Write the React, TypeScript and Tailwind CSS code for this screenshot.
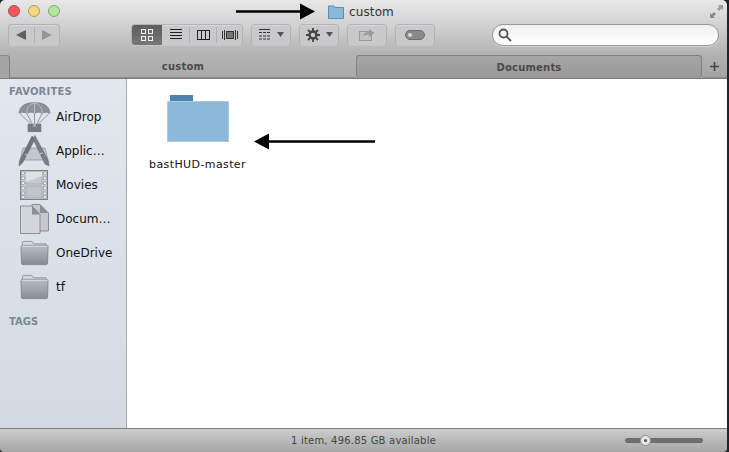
import React from 'react';

const uiFont = { fontFamily: '"DejaVu Sans", "Liberation Sans", sans-serif' };

function FolderGlyph() {
  return (
    <svg width="29" height="26" viewBox="0 0 30 26">
      <defs>
        <linearGradient id="sideFolder" x1="0" y1="0" x2="0" y2="1">
          <stop offset="0" stopColor="#b9bec6" />
          <stop offset="1" stopColor="#868c96" />
        </linearGradient>
      </defs>
      <path d="M2.5 5V2.5Q2.5 1 4 1H11Q13 1 14 3.5H27V7H2.5Z" fill="#d6dae0" stroke="#7e848d" strokeWidth="0.8" />
      <path d="M1 6.5Q1 5 2.5 5H27.5Q29 5 29 6.5L28.5 23.5Q28.5 25 27 25H3Q1.5 25 1.5 23.5Z" fill="url(#sideFolder)" stroke="#777d87" strokeWidth="0.8" />
      <path d="M1.5 6H28.5" stroke="#dfe2e6" strokeWidth="1" />
    </svg>
  );
}

function AirDropGlyph() {
  return (
    <svg width="33" height="32" viewBox="0 0 34 32">
      <path d="M1 12Q2 1 17 1Q32 1 33 12Q29 10 25 12Q21 10 17 12Q13 10 9 12Q5 10 1 12Z" fill="#8d9299" stroke="#6f747b" strokeWidth="0.6" />
      <path d="M9 12Q9 4 17 1Q25 4 25 12M17 1V12" fill="none" stroke="#c1c5ca" strokeWidth="0.9" />
      <path d="M1.5 12L13 23M9 12L14.5 23M25 12L19.5 23M32.5 12L21 23M17 12V23" fill="none" stroke="#7f848b" strokeWidth="0.8" />
      <rect x="10" y="23" width="14" height="8.5" fill="#777c83" />
      <rect x="15.5" y="23" width="3" height="3" fill="#a9adb2" />
    </svg>
  );
}

function AppsGlyph() {
  return (
    <svg width="32" height="32" viewBox="0 0 32 32">
      <path d="M5 13H27L30 25H2Z" fill="#c3c7cd" stroke="#8a8f97" strokeWidth="0.7" />
      <path d="M14 1L1.5 26L1 31L4.5 28L17 4Z" fill="#70757d" stroke="#5f646c" strokeWidth="0.5" />
      <path d="M17 0.5L15 4L27 29L31 31L30.5 26Z" fill="#7a7f87" stroke="#62676f" strokeWidth="0.5" />
      <path d="M7 19L9.5 20.3M22 19L24.5 17.8" stroke="#d5d8dc" strokeWidth="1" />
    </svg>
  );
}

function MoviesGlyph() {
  return (
    <svg width="28" height="30" viewBox="0 0 28 30">
      <rect x="0.5" y="0.5" width="27" height="29" fill="#c9cdd2" stroke="#7c8189" />
      <rect x="6" y="2" width="16" height="12" fill="#c6cacf" stroke="#8d9298" strokeWidth="0.5" />
      <rect x="6" y="16" width="16" height="12" fill="#c0c4ca" stroke="#8d9298" strokeWidth="0.5" />
      <path d="M6 2H22V6L6 12Z" fill="#dfe2e5" />
      {[2, 7, 12, 17, 22, 26].map((y) => (
        <React.Fragment key={y}>
          <rect x="1.5" y={y} width="3" height="2.6" fill="#f2f3f5" stroke="#777c84" strokeWidth="0.5" />
          <rect x="23.5" y={y} width="3" height="2.6" fill="#f2f3f5" stroke="#777c84" strokeWidth="0.5" />
        </React.Fragment>
      ))}
    </svg>
  );
}

function DocsGlyph() {
  return (
    <svg width="29" height="30" viewBox="0 0 29 30">
      <path d="M14 0.5H20L28.5 9V27H18V10L12 4V0.5Z" fill="#c4c8ce" stroke="#767b83" strokeWidth="0.8" />
      <path d="M0.5 2H12L20 10.5V29.5H0.5Z" fill="#d3d6db" stroke="#767b83" strokeWidth="0.8" />
      <path d="M12 2V10.5H20Z" fill="#8b9097" />
      <path d="M20 0.5V9H28.5Z" fill="#8b9097" />
    </svg>
  );
}

function ToolbarBtn({ className, children }: { className: string; children: React.ReactNode }) {
  return (
    <div className={`h-[22px] flex items-center rounded-[4px] border border-[#b4b4b4] border-b-[#c6c6c6] bg-[#c9c9cb] shadow-[inset_0_1px_0_#d8d8da] ${className}`}>
      {children}
    </div>
  );
}

function SideItem({ label, children }: { label: string; children: React.ReactNode }) {
  return (
    <div className="h-[34px] flex items-center">
      <div className="w-[56px] pl-[17px] pr-[5px] flex items-center justify-center shrink-0">{children}</div>
      <span className="text-[12px] text-[#111] whitespace-nowrap">{label}</span>
    </div>
  );
}

function Caret() {
  return (
    <svg width="7" height="5" viewBox="0 0 7 5">
      <path d="M0 0H7L3.5 5Z" fill="#555" />
    </svg>
  );
}

export default function App() {
  return (
    <div style={uiFont} className="relative w-[729px] h-[452px] bg-[#20242c] overflow-hidden">
      <div className="w-[727px] h-full flex flex-col rounded-t-[5px] rounded-b-[4px] overflow-hidden">
        {/* 타이틀 + 툴바 */}
        <div className="h-[55px] shrink-0 bg-gradient-to-b from-[#e8e8e8] via-[#cfcfcf] to-[#b2b2b2]">
          <div className="h-[23px] relative flex items-center justify-center">
            <div className="absolute left-[8px] top-[5px] flex gap-[8px]">
              <span className="w-[12px] h-[12px] rounded-full bg-[#f0585c] border border-[#b24a4d]" />
              <span className="w-[12px] h-[12px] rounded-full bg-[#f5d77e] border border-[#b39a54]" />
              <span className="w-[12px] h-[12px] rounded-full bg-[#b5e5a0] border border-[#7fa86f]" />
            </div>
            <div className="mr-[5px] flex items-center gap-[5px]">
              <svg width="16" height="14" viewBox="0 0 16 14">
                <path d="M0.5 13.5V1H6L7 2.5H15.5V13.5Z" fill="#8cb8dc" stroke="#5f8bb0" />
              </svg>
              <span className="text-[12px] text-[#333] tracking-[0.1px]">custom</span>
            </div>
            <svg className="absolute right-[3px] top-[4px]" width="15" height="15" viewBox="0 0 15 15">
              <path d="M9 1H14V6L12.5 4.5L10 7L8 5L10.5 2.5Z" fill="#9a9a9a" />
              <path d="M1 9V14H6L4.5 12.5L7 10L5 8L2.5 10.5Z" fill="#8a8a8a" />
            </svg>
          </div>

          <div className="h-[23px] flex items-center pl-[8px]">
            <ToolbarBtn className="w-[52px]">
              <div className="flex-1 flex justify-center">
                <svg width="10" height="10" viewBox="0 0 10 10"><path d="M0 5L10 0V10Z" fill="#5f5f5f" /></svg>
              </div>
              <div className="w-px h-[16px] bg-[#b2b2b2]" />
              <div className="flex-1 flex justify-center">
                <svg width="10" height="10" viewBox="0 0 10 10"><path d="M10 5L0 0V10Z" fill="#959595" /></svg>
              </div>
            </ToolbarBtn>

            <ToolbarBtn className="w-[112px] ml-[71px] overflow-hidden">
              <div className="w-[30px] h-full flex items-center justify-center bg-gradient-to-b from-[#5d5d5d] to-[#787878]">
                <svg width="12" height="12" viewBox="0 0 12 12" fill="none" stroke="#f2f2f2" strokeWidth="1">
                  <rect x="0.5" y="0.5" width="4" height="4" /><rect x="7.5" y="0.5" width="4" height="4" />
                  <rect x="0.5" y="7.5" width="4" height="4" /><rect x="7.5" y="7.5" width="4" height="4" />
                </svg>
              </div>
              <div className="w-[27px] flex justify-center">
                <svg width="12" height="11" viewBox="0 0 12 11" stroke="#222" strokeWidth="1"><path d="M0 .5H12M0 3.5H12M0 6.5H12M0 9.5H12" /></svg>
              </div>
              <div className="w-px h-[16px] bg-[#b2b2b2]" />
              <div className="w-[26px] flex justify-center">
                <svg width="13" height="10" viewBox="0 0 13 10" fill="none" stroke="#222" strokeWidth="1"><rect x="0.5" y="0.5" width="12" height="9" /><path d="M4.5 0V10M8.5 0V10" /></svg>
              </div>
              <div className="w-px h-[16px] bg-[#b2b2b2]" />
              <div className="flex-1 flex justify-center">
                <svg width="16" height="10" viewBox="0 0 16 10" fill="none" stroke="#333" strokeWidth="1"><path d="M.5 1V9M2.5 0V10M13.5 0V10M15.5 1V9" /><rect x="4.5" y="1.5" width="7" height="7" fill="#777" /></svg>
              </div>
            </ToolbarBtn>

            <ToolbarBtn className="w-[40px] ml-[8px] justify-center gap-[7px]">
              <svg width="11" height="11" viewBox="0 0 11 11" stroke="#333" strokeWidth="1"><path d="M0 .5H11" /><path d="M0 3.5H11" strokeDasharray="3 1" /><path d="M0 7H11M0 10H11" strokeDasharray="3 1" /></svg>
              <Caret />
            </ToolbarBtn>

            <ToolbarBtn className="w-[40px] ml-[8px] justify-center gap-[6px]">
              <svg width="14" height="14" viewBox="0 0 14 14">
                <circle cx="7" cy="7" r="3.5" fill="none" stroke="#444" strokeWidth="2.4" />
                <path d="M7 0V3M7 11V14M0 7H3M11 7H14M2 2L4 4M10 10L12 12M2 12L4 10M10 4L12 2" stroke="#444" strokeWidth="1.8" />
              </svg>
              <Caret />
            </ToolbarBtn>

            <ToolbarBtn className="w-[40px] ml-[8px] justify-center">
              <svg width="16" height="13" viewBox="0 0 16 13">
                <rect x="0.5" y="3.5" width="12" height="9" fill="#c2c2c2" stroke="#9a9a9a" />
                <path d="M4 8Q5 4 10 4V1L15.5 5L10 9V6.5Q6 6.5 4 8Z" fill="#9a9a9a" />
              </svg>
            </ToolbarBtn>

            <ToolbarBtn className="w-[40px] ml-[8px] justify-center">
              <span className="w-[20px] h-[10px] rounded-full bg-[#8a8a8a] border border-[#6e6e6e] flex items-center pl-[2px]">
                <span className="w-[4px] h-[4px] rounded-full bg-[#d8d8d8]" />
              </span>
            </ToolbarBtn>

            <div className="w-[227px] h-[22px] ml-[57px] rounded-full border border-[#9a9a9a] bg-gradient-to-b from-[#f0f0f0] to-white flex items-center pl-[5px] shadow-[0_1px_0_#d4d4d4]">
              <svg width="14" height="14" viewBox="0 0 14 14" fill="none" stroke="#555" strokeWidth="1.8">
                <circle cx="5.5" cy="5.5" r="4" /><path d="M8.5 8.5L13 13" />
              </svg>
            </div>
          </div>
        </div>

        {/* 탭 */}
        <div className="h-[23px] shrink-0 flex bg-[#a8a8a8] text-[10px] leading-[24px] font-bold text-[#4a4a4a] tracking-[0.2px]">
          <div className="w-[10px] bg-[#a4a4a4] border-t border-[#8c8c8c] border-r border-r-[#7e7e7e] rounded-tr-[4px]" />
          <div className="w-[346px] pt-[2px] flex items-center justify-center bg-gradient-to-b from-[#b4b4b4] to-[#a9a9a9] border-b border-[#8c8c8c]">custom</div>
          <div className="flex-1 pt-[1px] flex items-center justify-center border-t border-l border-r border-[#808080] rounded-t-[4px] rounded-b-[4px] bg-gradient-to-b from-[#a6a6a6] to-[#999]">Documents</div>
          <div className="w-[25px] flex items-center justify-center bg-gradient-to-b from-[#b2b2b2] to-[#a4a4a4] border-b border-[#8c8c8c]">
            <svg width="9" height="9" viewBox="0 0 9 9" stroke="#444" strokeWidth="1.6"><path d="M4.5 0V9M0 4.5H9" /></svg>
          </div>
        </div>

        {/* 본문 */}
        <div className="h-[350px] shrink-0 flex border-t border-[#7c7c7c]">
          <aside className="w-[127px] shrink-0 bg-gradient-to-b from-[#e2e7ed] to-[#d3dae3] border-r border-[#a9a9a9]">
            <div className="h-[20px] pl-[9px] mb-[1px] flex items-end text-[10px] leading-[14px] font-bold text-[#7a8794] tracking-[0.2px]">FAVORITES</div>
            <SideItem label="AirDrop"><AirDropGlyph /></SideItem>
            <SideItem label="Applic…"><AppsGlyph /></SideItem>
            <SideItem label="Movies"><MoviesGlyph /></SideItem>
            <SideItem label="Docum…"><DocsGlyph /></SideItem>
            <SideItem label="OneDrive"><FolderGlyph /></SideItem>
            <SideItem label="tf"><FolderGlyph /></SideItem>
            <div className="mt-[10px] pl-[9px] text-[10px] font-bold text-[#7a8794]">TAGS</div>
          </aside>
          <main className="flex-1 bg-white">
            <div className="w-[141px] pt-[16px] flex flex-col items-center">
              <svg width="62" height="47" viewBox="0 0 62 47">
                <rect x="3" y="0" width="23" height="6" fill="#4f82ae" />
                <rect x="0" y="6" width="62" height="41" fill="#8cb8da" />
                <rect x="0.5" y="6.5" width="61" height="40" fill="none" stroke="#a8cbe5" />
              </svg>
              <span className="mt-[16px] text-[11px] leading-[14px] tracking-[0.4px] text-[#111] whitespace-nowrap">bastHUD-master</span>
            </div>
          </main>
        </div>

        {/* 상태바 */}
        <div className="h-[24px] shrink-0 relative flex items-center justify-center border-t border-[#7d7d7d] bg-gradient-to-b from-[#cdcdcd] to-[#a6a6a6]">
          <span className="text-[10px] text-[#444] tracking-[0.2px]">1 item, 496.85 GB available</span>
          <div className="absolute left-[625px] top-[9px] w-[78px] h-[5px] rounded-full bg-[#6e6e6e]" />
          <div className="absolute left-[640px] top-[6px] w-[11px] h-[11px] rounded-full bg-[#e8e8e8] border border-[#8c8c8c] flex items-center justify-center">
            <span className="w-[3px] h-[3px] rounded-full bg-[#555]" />
          </div>
        </div>
      </div>

      {/* 주석 화살표 */}
      <svg className="absolute left-[236px] top-[2px]" width="82" height="18" viewBox="0 0 82 18">
        <path d="M0 9.5H66" stroke="#000" strokeWidth="2.4" />
        <path d="M64 1.5L79 9.5L64 17.5Z" fill="#000" />
      </svg>
      <svg className="absolute left-[254px] top-[132px]" width="122" height="18" viewBox="0 0 122 18">
        <path d="M14 9.5H121" stroke="#000" strokeWidth="2.4" />
        <path d="M15 1.5L0 9.5L15 17.5Z" fill="#000" />
      </svg>
    </div>
  );
}
